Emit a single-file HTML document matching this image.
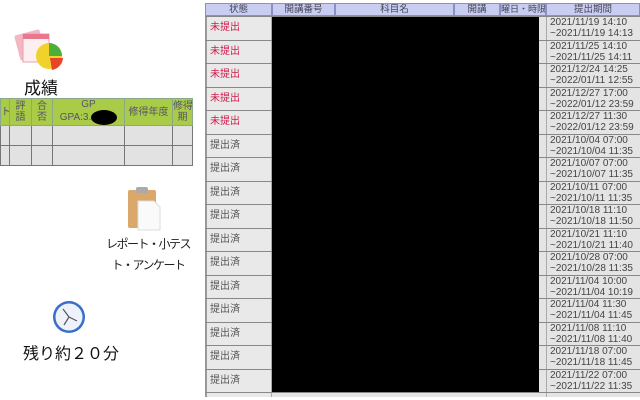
<!DOCTYPE html>
<html><head><meta charset="utf-8"><style>
*{margin:0;padding:0;box-sizing:border-box}
body{width:640px;height:400px;overflow:hidden;background:#fff;position:relative;font-family:"Liberation Sans","Noto Sans CJK JP",sans-serif}
.a{position:absolute}
.gt{position:absolute;left:0;top:98px;width:192px;border-collapse:collapse;font-size:10px;color:#556;table-layout:fixed}
.gt td{border:1px solid #777;text-align:center;line-height:11px;padding:0;white-space:nowrap;overflow:hidden}
.gt tr.h td{background:#a9cb47;height:27px;border-color:#8a8}
.gt tr.r td{background:#e2e2e2;height:20px}
.hd{position:absolute;top:3px;height:13px;background:#c9cdf2;border:1px solid #8a8fc8;font-size:9.5px;color:#445;text-align:center;line-height:11px;white-space:nowrap;overflow:hidden}
.row{position:absolute;left:205px;width:435px;height:25px;border-top:1px solid #888;background:#e4e4e4;overflow:hidden}
.row .s{position:absolute;left:0;top:0;width:67px;height:24px;background:#e8e9e8;border-left:2px solid #999;border-right:1px solid #aaa;font-size:10px;color:#555;padding-left:3px;line-height:22px}
.row .d{position:absolute;left:341px;top:0;width:94px;height:24px;border-left:1px solid #aaa;font-size:10px;color:#444;line-height:11px;padding:0 0 0 3px;white-space:nowrap}
.red{color:#d0184a!important}
</style></head><body>
<svg class="a" style="left:14px;top:28px" width="52" height="46" viewBox="0 0 52 46">
<rect x="3" y="4" width="26" height="26" rx="2" fill="#f2b7c2" transform="rotate(-15 16 17)"/>
<rect x="9" y="6" width="26" height="28" fill="#fdeef0" stroke="#e8a0b0"/>
<rect x="9" y="6" width="26" height="5" fill="#e87890"/>
<circle cx="35" cy="28" r="13" fill="#f1d22b"/>
<path d="M35 28 L35 15 A13 13 0 0 1 48 28 Z" fill="#4caf3a"/>
<path d="M36 30 L49 30 A13 13 0 0 1 38 42 Z" fill="#e8442a"/>
</svg>
<div class="a" style="left:24px;top:74px;font-size:17px;color:#111">成績</div>
<table class="gt"><colgroup><col style="width:9px"><col style="width:22px"><col style="width:21px"><col style="width:72px"><col style="width:48px"><col style="width:20px"></colgroup>
<tr class="h"><td>ト</td><td>評<br>語</td><td>合<br>否</td><td>GP<br>GPA:3.<span style="display:inline-block;width:26px;height:15px;background:#000;border-radius:50%;vertical-align:middle"></span></td><td>修得年度</td><td>修得<br>期</td></tr>
<tr class="r"><td></td><td></td><td></td><td></td><td></td><td></td></tr>
<tr class="r"><td></td><td></td><td></td><td></td><td></td><td></td></tr>
</table>
<svg class="a" style="left:126px;top:186px" width="36" height="46" viewBox="0 0 36 46">
<rect x="2" y="4" width="28" height="38" rx="2" fill="#d9a86a"/>
<rect x="10" y="1" width="12" height="6" rx="2" fill="#aaa"/>
<path d="M12 15 H28 L34 21 V44 H12 Z" fill="#fafafa" stroke="#ddd"/>
</svg>
<div class="a" style="left:98px;top:234px;font-size:12px;color:#222;line-height:21px;text-align:center;width:100px;letter-spacing:-1.5px;white-space:nowrap">レポート・小テス<br>ト・アンケート</div>
<svg class="a" style="left:51px;top:299px" width="36" height="36" viewBox="0 0 36 36">
<circle cx="18" cy="18" r="16" fill="#3a6fc7"/>
<circle cx="18" cy="18" r="13.5" fill="#eef3fb"/>
<path d="M18 18 L12 10 M18 18 L26 22 M18 18 L13 26" stroke="#556" stroke-width="1.2"/>
</svg>
<div class="a" style="left:23px;top:340px;font-size:16px;color:#111;white-space:nowrap">残り約２０分</div>

<div class="hd" style="left:205px;width:67px">状態</div>
<div class="hd" style="left:272px;width:63px">開講番号</div>
<div class="hd" style="left:335px;width:119px">科目名</div>
<div class="hd" style="left:454px;width:46px">開講</div>
<div class="hd" style="left:500px;width:46px;font-size:9px">曜日・時限</div>
<div class="hd" style="left:546px;width:94px">提出期間</div>

<div class="row" style="top:16px"><div class="s red">未提出</div><div class="d">2021/11/19 14:10<br>~2021/11/19 14:13</div></div>
<div class="row" style="top:40px"><div class="s red">未提出</div><div class="d">2021/11/25 14:10<br>~2021/11/25 14:11</div></div>
<div class="row" style="top:63px"><div class="s red">未提出</div><div class="d">2021/12/24 14:25<br>~2022/01/11 12:55</div></div>
<div class="row" style="top:87px"><div class="s red">未提出</div><div class="d">2021/12/27 17:00<br>~2022/01/12 23:59</div></div>
<div class="row" style="top:110px"><div class="s red">未提出</div><div class="d">2021/12/27 11:30<br>~2022/01/12 23:59</div></div>
<div class="row" style="top:134px"><div class="s">提出済</div><div class="d">2021/10/04 07:00<br>~2021/10/04 11:35</div></div>
<div class="row" style="top:157px"><div class="s">提出済</div><div class="d">2021/10/07 07:00<br>~2021/10/07 11:35</div></div>
<div class="row" style="top:181px"><div class="s">提出済</div><div class="d">2021/10/11 07:00<br>~2021/10/11 11:35</div></div>
<div class="row" style="top:204px"><div class="s">提出済</div><div class="d">2021/10/18 11:10<br>~2021/10/18 11:50</div></div>
<div class="row" style="top:228px"><div class="s">提出済</div><div class="d">2021/10/21 11:10<br>~2021/10/21 11:40</div></div>
<div class="row" style="top:251px"><div class="s">提出済</div><div class="d">2021/10/28 07:00<br>~2021/10/28 11:35</div></div>
<div class="row" style="top:275px"><div class="s">提出済</div><div class="d">2021/11/04 10:00<br>~2021/11/04 10:19</div></div>
<div class="row" style="top:298px"><div class="s">提出済</div><div class="d">2021/11/04 11:30<br>~2021/11/04 11:45</div></div>
<div class="row" style="top:322px"><div class="s">提出済</div><div class="d">2021/11/08 11:10<br>~2021/11/08 11:40</div></div>
<div class="row" style="top:345px"><div class="s">提出済</div><div class="d">2021/11/18 07:00<br>~2021/11/18 11:45</div></div>
<div class="row" style="top:369px"><div class="s">提出済</div><div class="d">2021/11/22 07:00<br>~2021/11/22 11:35</div></div>
<div class="row" style="top:392px;height:5px"><div class="s"></div><div class="d"></div></div>
<div class="a" style="left:272px;top:17px;width:267px;height:375px;background:#000"></div>
</body></html>
